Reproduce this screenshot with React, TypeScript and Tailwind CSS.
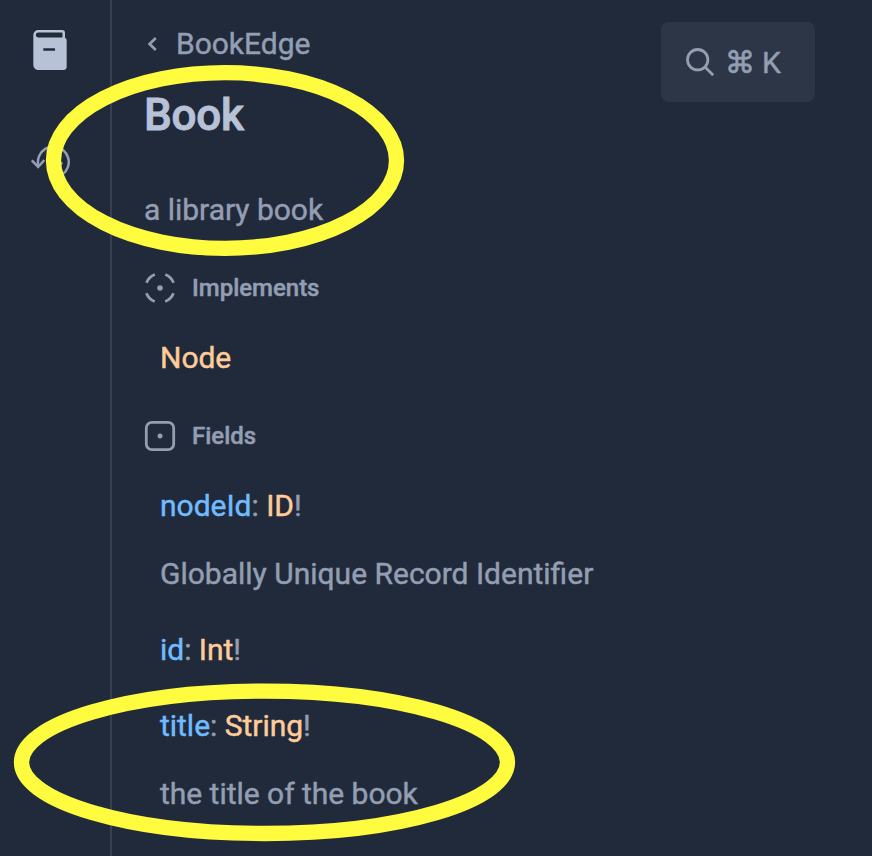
import type { ReactNode } from 'react';

function DocsIcon() {
  return (
    <svg className="h-10 w-[34px] text-[#b7c2d7]" viewBox="0 0 20 24" fill="none">
      <path d="M0.75 3C0.75 1.75736 1.75736 0.75 3 0.75H17.25C17.8023 0.75 18.25 1.19772 18.25 1.75V5.25" stroke="currentColor" strokeWidth="1.5" />
      <path
        fillRule="evenodd"
        clipRule="evenodd"
        d="M3 4.5C2.17157 4.5 1.5 3.82843 1.5 3H0V21C0 22.6569 1.34315 24 3 24H18.25C19.2165 24 20 23.2165 20 22.25V6.25C20 5.2835 19.2165 4.5 18.25 4.5H3ZM6 11H13V12.5H6V11Z"
        fill="currentColor"
      />
    </svg>
  );
}

function HistoryIcon() {
  return (
    <svg className="h-[34px] w-10 text-[#939eb2]" viewBox="0 0 24 20" fill="none" stroke="currentColor" strokeWidth="1.5">
      <path d="M1.59375 9.52344L4.87259 12.9944L8.07872 9.41249" strokeLinecap="square" />
      <path d="M13.75 5.25V10.75H18.75" strokeLinecap="square" />
      <path d="M4.95427 11.9332C4.55457 10.0629 4.74441 8.11477 5.49765 6.35686C6.25089 4.59894 7.5305 3.11772 9.16034 2.11709C10.7902 1.11647 12.6901 0.645626 14.5986 0.769388C16.5071 0.893151 18.3303 1.60543 19.8172 2.80818C21.3042 4.01093 22.3818 5.64501 22.9017 7.48548C23.4216 9.32595 23.3582 11.2823 22.7203 13.0853C22.0824 14.8883 20.9013 16.4492 19.3396 17.5532C17.778 18.6572 15.9125 19.25 14 19.25" />
    </svg>
  );
}

function ImplementsIcon() {
  return (
    <svg className="size-8" viewBox="0 0 32 32" fill="none">
      <circle cx="16" cy="16" r="14.5" stroke="currentColor" strokeWidth="2.8" pathLength={8} strokeDasharray="1.06 0.94" transform="rotate(21.5 16 16)" />
      <circle cx="16" cy="16" r="2.8" fill="currentColor" />
    </svg>
  );
}

function FieldsIcon() {
  return (
    <svg className="size-8" viewBox="0 0 32 32" fill="none">
      <rect x="2.3" y="2.3" width="27.4" height="27.4" rx="5.6" stroke="currentColor" strokeWidth="2.8" />
      <circle cx="16" cy="16" r="2.5" fill="currentColor" />
    </svg>
  );
}

function SectionTitle({ icon, children }: { icon: ReactNode; children: ReactNode }) {
  return (
    <div className="mt-[42px] flex h-8 items-center gap-4">
      {icon}
      <h2 className="text-[24px] leading-8 font-medium">{children}</h2>
    </div>
  );
}

function Field({ name, type, className }: { name: string; type: string; className: string }) {
  return (
    <div className={`pl-4 ${className}`}>
      <span className="text-[#70bcff]">{name}</span>: <span className="text-[#ffcc99]">{type}</span>!
    </div>
  );
}

export default function App() {
  return (
    <div className="relative flex h-[856px] w-[872px] overflow-hidden bg-[#212a3b] font-[Roboto,sans-serif] text-[30px] leading-10 tracking-[-0.02px] text-[#939eb2] [-webkit-text-stroke:0.45px]">
      <nav className="flex w-[112px] shrink-0 flex-col border-r-2 border-[#373f50]">
        <div className="mt-[30px] ml-[33px]"><DocsIcon /></div>
        <div className="mt-[75px] ml-[30px]"><HistoryIcon /></div>
      </nav>

      <main className="flex-1 pt-6 pl-8">
        <div className="flex items-center">
          <svg className="mr-[14px] h-4 w-[18px]" viewBox="0 0 18 16" fill="none">
            <path d="M11.8 2L5.6 8L11.8 14" stroke="currentColor" strokeWidth="2.7" />
          </svg>
          <a>BookEdge</a>
        </div>
        <h1 className="mt-[23px] text-[44px] leading-[56px] font-medium tracking-[-0.2px] text-[#b7c2d7] [-webkit-text-stroke:0.9px]">Book</h1>
        <p className="mt-[47px]">a library book</p>

        <SectionTitle icon={<ImplementsIcon />}>Implements</SectionTitle>
        <div className="mt-[34px] pl-4 text-[#ffcc99]">Node</div>

        <SectionTitle icon={<FieldsIcon />}>Fields</SectionTitle>
        <Field name="nodeId" type="ID" className="mt-[34px]" />
        <p className="mt-7 pl-4 tracking-normal">Globally Unique Record Identifier</p>
        <Field name="id" type="Int" className="mt-9" />
        <Field name="title" type="String" className="mt-9" />
        <p className="mt-7 pl-4">the title of the book</p>
      </main>

      <button className="mt-[22px] mr-[57px] flex h-20 w-[154px] shrink-0 items-center rounded-lg bg-[#2d3647] pl-[25px]">
        <svg className="h-7 w-[29px] shrink-0" viewBox="0 0 29 28" fill="none" stroke="currentColor" strokeWidth="2.8">
          <circle cx="11.7" cy="11.7" r="10.2" />
          <path d="M19 19L27.2 27.2" />
        </svg>
        <span className="mt-0.5 ml-[10px] w-[30px] text-center font-['DejaVu_Sans',sans-serif] text-[30px] [-webkit-text-stroke:0.7px]">⌘</span>
        <span className="mt-0.5 ml-[7px]">K</span>
      </button>

      <svg className="pointer-events-none absolute inset-0" width="872" height="856" viewBox="0 0 872 856" fill="none" stroke="#fffc40" strokeWidth="15.3">
        <ellipse cx="225" cy="160.5" rx="171.5" ry="87.8" />
        <ellipse cx="264.5" cy="762.3" rx="243" ry="71.2" />
      </svg>
    </div>
  );
}
